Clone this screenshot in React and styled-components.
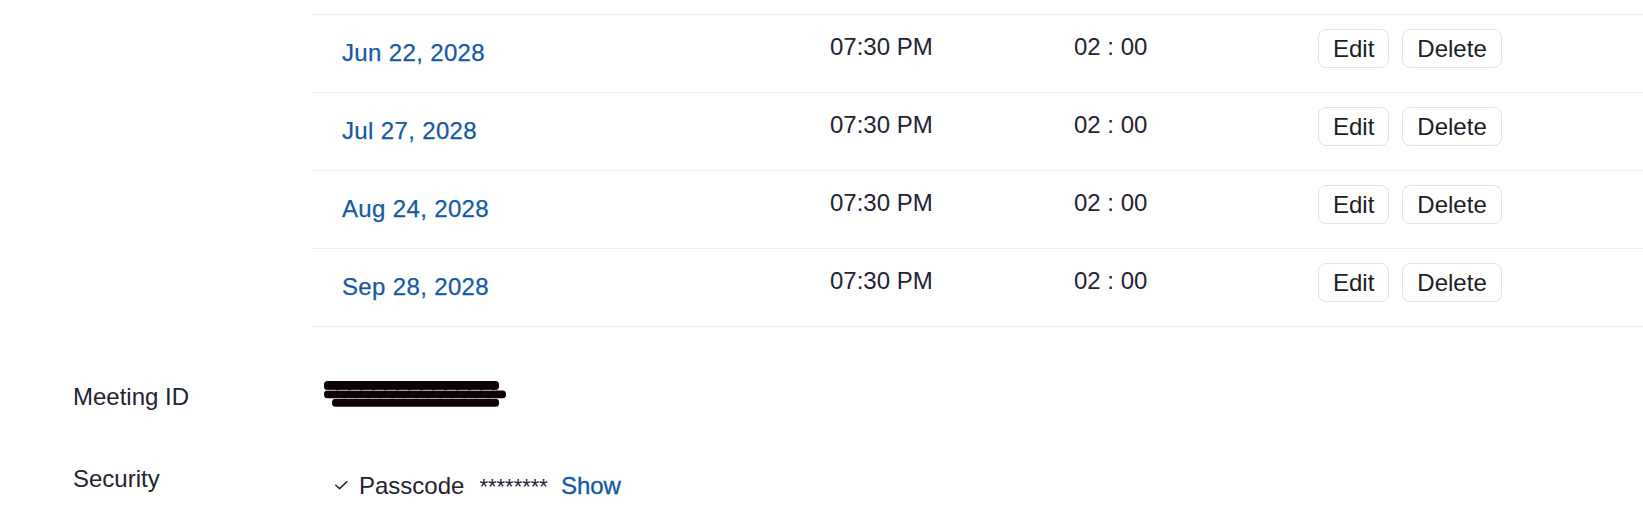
import React from "react";
import styled, { createGlobalStyle } from "styled-components";

const GlobalStyle = createGlobalStyle`
  html, body {
    margin: 0;
    padding: 0;
    background: #ffffff;
  }
  body {
    font-family: "Liberation Sans", Arial, Helvetica, sans-serif;
    color: #232333;
    -webkit-font-smoothing: antialiased;
  }
`;

const Page = styled.div`
  width: 1643px;
  padding-top: 14px;
  font-size: 24px;
  line-height: 36px;
`;

const Schedule = styled.div`
  margin-left: 312px;
  border-top: 1px solid #ededf2;
`;

const Row = styled.div`
  box-sizing: border-box;
  height: 78px;
  padding-top: 14px;
  display: grid;
  grid-template-columns: 518px 244px 244px 1fr;
  align-items: start;
  border-bottom: 1px solid #ededf2;
`;

const DateLink = styled.a`
  padding-left: 30px;
  margin-top: 6px;
  color: #125aa8;
  letter-spacing: 0.35px;
  -webkit-text-stroke: 0.25px #125aa8;
  text-decoration: none;
  cursor: pointer;
`;

const Cell = styled.div`
  color: #232333;
`;

const Actions = styled.div`
  display: flex;
  gap: 13px;
`;

const Button = styled.button`
  box-sizing: border-box;
  height: 39px;
  padding: 0 14px;
  border: 1px solid #e2e2e8;
  border-radius: 8px;
  background: #ffffff;
  color: #1d1d24;
  font-family: inherit;
  font-size: 24px;
  line-height: 27px;
  cursor: pointer;
`;

const Details = styled.div`
  margin-top: 52px;
  padding-left: 73px;
  display: grid;
  grid-template-columns: 239px 1fr;
  row-gap: 46px;
  align-items: start;
`;

const Label = styled.div`
  color: #232333;
`;

const Redacted = styled.svg`
  display: block;
  margin: 2px 0 0 12px;
`;

const Value = styled.div`
  display: flex;
  align-items: baseline;
  margin-top: 7px;
  padding-left: 23px;
`;

const Check = styled.svg`
  display: block;
  margin-right: 11px;
`;

const Text = styled.span`
  margin-right: ${(p) => p.$gap || 0}px;
`;

const Mask = styled.span`
  font-size: 22px;
  margin-right: 13px;
  color: #232333;
`;

const ShowLink = styled.a`
  color: #125aa8;
  text-decoration: none;
  -webkit-text-stroke: 0.35px #125aa8;
  cursor: pointer;
`;

const occurrences = [
  { date: "Jun 22, 2028", time: "07:30 PM", duration: "02 : 00" },
  { date: "Jul 27, 2028", time: "07:30 PM", duration: "02 : 00" },
  { date: "Aug 24, 2028", time: "07:30 PM", duration: "02 : 00" },
  { date: "Sep 28, 2028", time: "07:30 PM", duration: "02 : 00" },
];

export default function App() {
  return (
    <>
      <GlobalStyle />
      <Page>
        <Schedule>
          {occurrences.map((o) => (
            <Row key={o.date}>
              <DateLink>{o.date}</DateLink>
              <Cell>{o.time}</Cell>
              <Cell>{o.duration}</Cell>
              <Actions>
                <Button>Edit</Button>
                <Button>Delete</Button>
              </Actions>
            </Row>
          ))}
        </Schedule>
        <Details>
          <Label>Meeting ID</Label>
          <Redacted width="184" height="27" viewBox="0 0 184 27">
            <rect x="0" y="0" width="175" height="9" rx="3.5" fill="#0c0207" />
            <rect x="0" y="9.6" width="182" height="7.6" rx="3.5" fill="#0c0207" />
            <rect x="8" y="17.8" width="167" height="8" rx="3.5" fill="#0c0207" />
            <line x1="3" y1="9.3" x2="172" y2="9.3" stroke="#b9b6b8" strokeWidth="0.9" strokeDasharray="9 3" />
            <line x1="10" y1="17.5" x2="172" y2="17.5" stroke="#b9b6b8" strokeWidth="0.9" strokeDasharray="9 3" />
          </Redacted>
          <Label>Security</Label>
          <Value>
            <Check width="13" height="13" viewBox="0 0 13 13">
              <path
                d="M0.8 4.2 L4.6 7.6 L11.8 0.7"
                fill="none"
                stroke="#232333"
                strokeWidth="1.5"
                strokeLinecap="round"
                strokeLinejoin="round"
              />
            </Check>
            <Text $gap={15}>Passcode</Text>
            <Mask>********</Mask>
            <ShowLink>Show</ShowLink>
          </Value>
        </Details>
      </Page>
    </>
  );
}
